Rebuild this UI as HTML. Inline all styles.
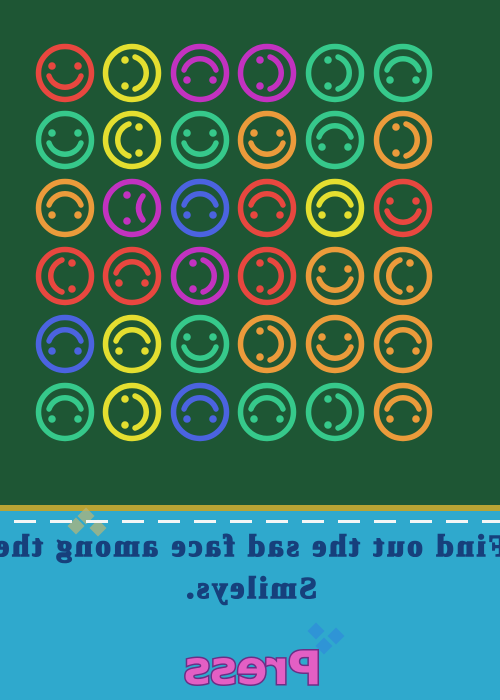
<!DOCTYPE html>
<html><head><meta charset="utf-8"><style>
html,body{margin:0;padding:0;width:500px;height:700px;overflow:hidden;}
body{position:relative;background:#1d5533;}
.top{position:absolute;left:0;top:0;width:500px;height:506px;background:#1e5634;}
.gold{position:absolute;left:0;top:505px;width:500px;height:6px;background:#b9a334;}
.bot{position:absolute;left:0;top:511px;width:500px;height:189px;background:#2fa9cd;}
.dash{position:absolute;left:0;top:520px;width:500px;height:3px;background:repeating-linear-gradient(90deg,transparent 0 14px,#f4f6f6 14px 36px);}
.t{position:absolute;left:-150px;width:800px;text-align:center;font-family:"Liberation Serif",serif;font-weight:bold;color:#17407c;white-space:nowrap;transform:scaleX(-1);-webkit-text-stroke:1.6px #17407c;}
.press{position:absolute;left:100px;width:306px;top:640px;text-align:center;font-family:"DejaVu Sans","Liberation Sans",sans-serif;font-weight:bold;font-size:46px;line-height:56px;letter-spacing:-1px;color:#e35fc4;-webkit-text-stroke:3px #6b2f86;paint-order:stroke fill;transform:scaleX(-1);}
.dm{position:absolute;width:12px;height:12px;transform:rotate(45deg);}
</style></head><body>
<div class="top"></div>
<svg style="position:absolute;left:0;top:0" width="500" height="506">
<defs>
<g id="S"><circle r="26.5" fill="none" stroke-width="5.5"/><circle cx="-13" cy="-7" r="3.8" stroke="none"/><circle cx="13" cy="-7" r="3.8" stroke="none"/><path d="M-16 3 A17 17 0 0 0 16 3" fill="none" stroke-width="5.5" stroke-linecap="round"/></g>
<g id="SAD"><circle r="26.5" fill="none" stroke-width="5.5"/><circle cx="-5" cy="-13" r="3.8" stroke="none"/><circle cx="-5" cy="13" r="3.8" stroke="none"/><path d="M11 -12 Q2 0 11 12" fill="none" stroke-width="5.5" stroke-linecap="round"/></g>
</defs>
<g id="grid"></g>
</svg>
<div class="gold"></div>
<div class="bot"></div>
<div class="dm" style="left:70px;top:520px;background:#b9b776;opacity:.7"></div>
<div class="dm" style="left:80px;top:510px;background:#b9b776;opacity:.7"></div>
<div class="dm" style="left:92px;top:522px;background:#b9b776;opacity:.7"></div>
<div class="dm" style="left:310px;top:625px;background:#2f8fd8;opacity:.8"></div>
<div class="dm" style="left:330px;top:630px;background:#2f8fd8;opacity:.8"></div>
<div class="dm" style="left:318px;top:640px;background:#2f8fd8;opacity:.8"></div>
<div class="dash"></div>
<div class="t" style="top:528px;font-size:31px;letter-spacing:3px;">Find out the sad face among the</div>
<div class="t" style="top:570px;font-size:31px;letter-spacing:3px;">Smileys.</div>
<div class="press">Press</div>
<script>
var C={r:"#e8473f",y:"#e4df30",m:"#c232c0",g:"#36c98b",o:"#eb9b3b",b:"#4b63e0"};
var A={S:0,R:-90,L:90,U:180};
var rows=[
["rS","yR","mU","mR","gR","gU"],
["gS","yL","gS","oS","gU","oR"],
["oU","mX","bU","rU","yU","rS"],
["rL","rU","mR","rR","oS","oL"],
["bU","yU","gS","oR","oS","oU"],
["gU","yR","bU","gU","gR","oU"]];
var xs=[65,132,200,267,335,403],ys=[73,140,208,276,344,412],h="";
for(var i=0;i<6;i++)for(var j=0;j<6;j++){var c=rows[i][j],col=C[c[0]],t=c[1];
if(t=="X")h+='<use href="#SAD" transform="translate('+xs[j]+' '+ys[i]+')" fill="'+col+'" stroke="'+col+'"/>';
else h+='<use href="#S" transform="translate('+xs[j]+' '+ys[i]+') rotate('+A[t]+')" fill="'+col+'" stroke="'+col+'"/>';}
document.getElementById("grid").innerHTML=h;
</script>
</body></html>
